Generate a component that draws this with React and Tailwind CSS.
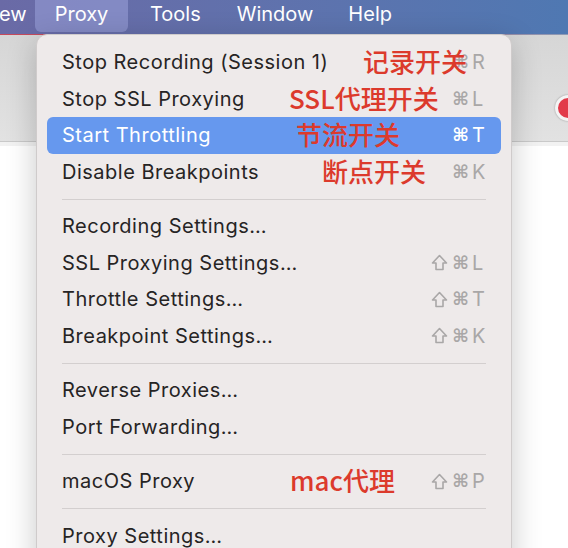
import React from "react";

const CJK = { fontFamily: '"Noto Sans CJK SC", "Noto Sans", sans-serif' };
const UI = { fontFamily: 'Inter, "Noto Sans", "DejaVu Sans", sans-serif' };

function ShiftIcon() {
  return (
    <svg width="17" height="17" viewBox="0 0 17 17" fill="none" stroke="currentColor" strokeWidth="1.6" strokeLinejoin="round">
      <path d="M8.5 1.5 L15.5 9 H12 V15.5 H5 V9 H1.5 Z" />
    </svg>
  );
}

function Shortcut({ shift, letter, active }) {
  const c = active ? "text-white" : "text-[#a9a7a7]";
  return (
    <div className={`flex items-center ${c}`} style={{ fontFamily: '"DejaVu Sans", sans-serif' }}>
      <span className="flex w-[21px] justify-center">{shift ? <ShiftIcon /> : null}</span>
      <span className="w-[21px] text-[18px] font-bold leading-none text-center">⌘</span>
      <span className="w-[16px] text-[20px] leading-none pl-[1px]" style={UI}>{letter}</span>
    </div>
  );
}

function Item({ label, shift, letter, active, note, noteLeft }) {
  return (
    <div className="relative h-[36.5px] px-[10px]">
      <div
        className={`flex h-full items-center justify-between rounded-[6px] pl-[15px] pr-[14px] ${
          active ? "bg-[#6698ee] text-white" : "text-[#262424]"
        }`}
      >
        <span className="text-[20px] leading-none tracking-[0.5px]" style={UI}>{label}</span>
        {letter && <Shortcut shift={shift} letter={letter} active={active} />}
      </div>
      {note && (
        <span
          className="absolute top-[1px] text-[26px] font-medium leading-[32px] text-[#dc3a2c]"
          style={{ ...CJK, left: noteLeft }}
        >
          {note}
        </span>
      )}
    </div>
  );
}

function Sep() {
  return (
    <div className="flex h-[18px] items-center px-[25px]">
      <div className="h-px w-full bg-[#d3cfcf]" />
    </div>
  );
}

export default function App() {
  return (
    <div className="relative h-[548px] w-[568px] overflow-hidden bg-white">
      {/* Menu bar */}
      <div
        className="flex h-[34px] items-start bg-gradient-to-r from-[#6a6aa6] via-[#5f72ad] to-[#4f78b2] text-[20px] leading-[28px] text-white"
        style={UI}
      >
        <span className="-ml-[1px] w-[36px]">ew</span>
        <div className="flex h-[32px] w-[93px] items-start justify-center rounded-b-[6px] bg-[#8b91cb]/80">
          Proxy
        </div>
        <span className="ml-[22px]">Tools</span>
        <span className="ml-[36px]">Window</span>
        <span className="ml-[35px]">Help</span>
      </div>
      {/* Window background */}
      <div className="flex flex-col">
        <div className="h-px bg-gradient-to-r from-[#c8485a] via-[#b05a78] to-[#8d9ab5]" />
        <div className="relative h-[106px] bg-gradient-to-b from-[#d6d6d6] to-[#e2e2e2]">
          <div className="absolute right-[-13px] top-[60px] h-[26px] w-[26px] rounded-full border-[3px] border-[#f4f4f4] bg-[#e23a4a] shadow-[0_0_2px_rgba(0,0,0,0.35)]" />
        </div>
        <div className="h-px bg-[#c9c9c9]" />
        <div className="h-[4px] bg-[#f2f2f2]" />
        <div className="h-[400px] bg-white" />
      </div>
      {/* Dropdown menu */}
      <div className="absolute left-[36px] top-[34px] w-[476px] rounded-t-[11px] border border-[#cfcbcb] bg-[#eeeaea] pt-[9px] shadow-[0_8px_30px_rgba(0,0,0,0.22)]">
        <Item label="Stop Recording (Session 1)" letter="R" note="记录开关" noteLeft="326px" />
        <Item label="Stop SSL Proxying" letter="L" note="SSL代理开关" noteLeft="252px" />
        <Item label="Start Throttling" letter="T" active note="节流开关" noteLeft="259px" />
        <Item label="Disable Breakpoints" letter="K" note="断点开关" noteLeft="285px" />
        <Sep />
        <Item label="Recording Settings…" />
        <Item label="SSL Proxying Settings…" shift letter="L" />
        <Item label="Throttle Settings…" shift letter="T" />
        <Item label="Breakpoint Settings…" shift letter="K" />
        <Sep />
        <Item label="Reverse Proxies…" />
        <Item label="Port Forwarding…" />
        <Sep />
        <Item label="macOS Proxy" shift letter="P" note="mac代理" noteLeft="253px" />
        <Sep />
        <Item label="Proxy Settings…" />
        <div className="h-[40px]" />
      </div>
    </div>
  );
}
